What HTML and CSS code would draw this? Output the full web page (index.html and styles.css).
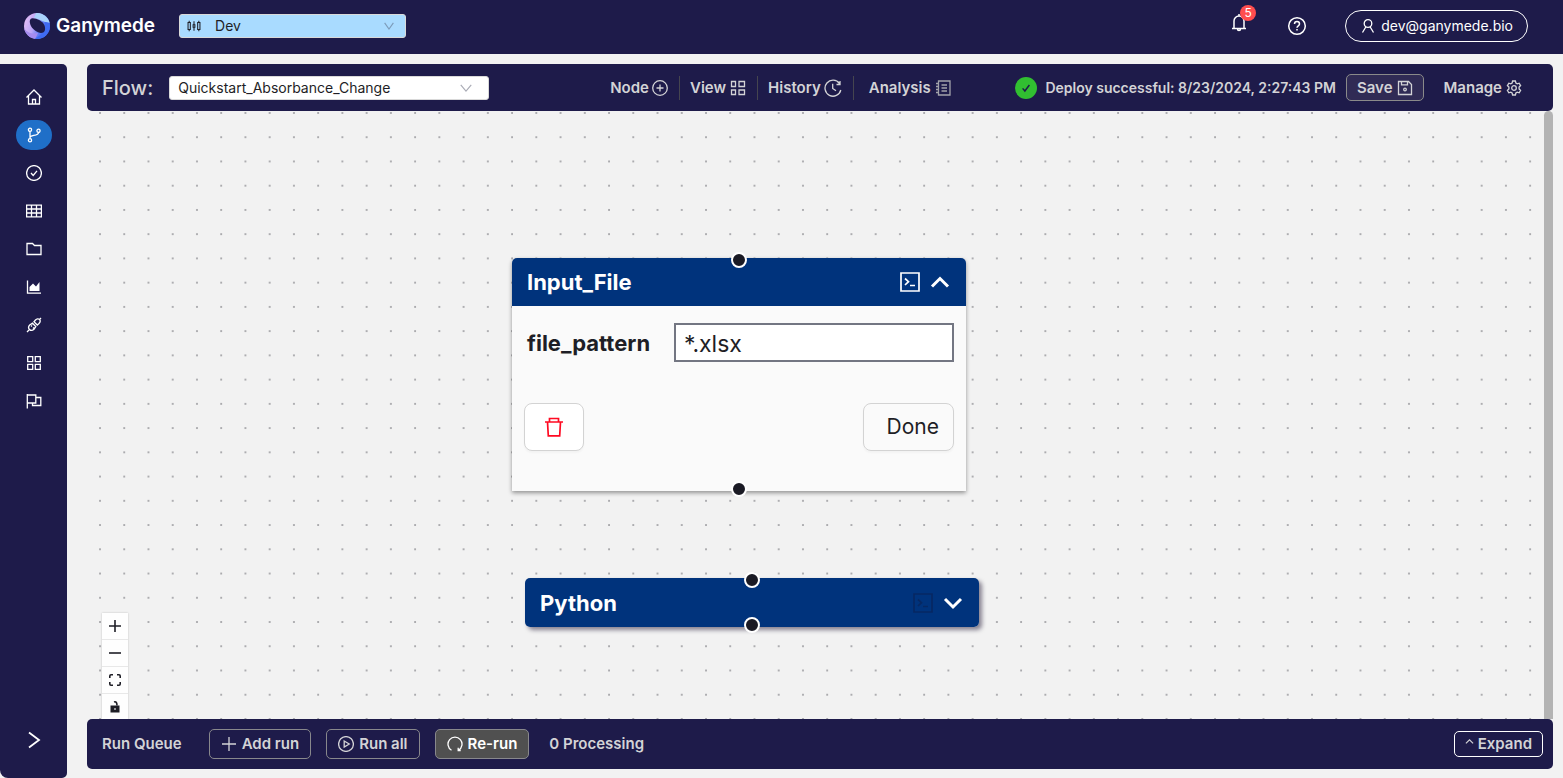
FILE: index.html
```html
<!DOCTYPE html>
<html lang="en">
<head>
<meta charset="utf-8">
<title>Ganymede</title>
<link rel="stylesheet" href="styles.css">
</head>
<body>
<header class="header">
  <a class="brand" href="#">
    <svg class="brand-mark" viewBox="0 0 26 26" aria-hidden="true">
      <defs>
        <linearGradient id="ring" x1="0" y1="0.3" x2="1" y2="0.7"><stop offset="0" stop-color="#e3bdf5"/><stop offset="0.4" stop-color="#b9a4f7"/><stop offset="0.65" stop-color="#5f7cf4"/><stop offset="1" stop-color="#2e55e6"/></linearGradient>
        <clipPath id="disc"><circle cx="13" cy="13" r="13"/></clipPath>
      </defs>
      <g clip-path="url(#disc)">
        <rect width="26" height="26" fill="url(#ring)"/>
        <path d="M12 0H26V10C21 10 16 6 10 5Z" fill="#a9d3fb"/>
        <path d="M21 9 26 10V26H10C17 23 21 18 21 9Z" fill="#3f6bf2"/>
        <path d="M0 15C4 21 9 21 14 20L11 26H0Z" fill="#a58bef"/>
      </g>
      <path d="M7.500 5.500C11 4.500 19 8 20.500 12.500S20.500 20 17 20 8 16 6.500 12 6 6 7.500 5.500Z" fill="#1e1b4a"/>
    </svg>
    <span>Ganymede</span>
  </a>
  <div class="select env-select">
    <svg class="icon env-icon" viewBox="0 0 16 16" aria-hidden="true"><path d="M2.500 2v2M2.500 12v2M1.200 4h2.600v8H1.200zM8 2.500v4M8 9.500v4M7 6.500h2v3H7zM13.500 2v2M13.500 12v2M12.200 4h2.600v8h-2.600z"/></svg>
    <select aria-label="Environment"><option>Dev</option></select>
    <svg class="icon chevron" viewBox="0 0 16 16" aria-hidden="true"><path d="m3 4.500 5 7 5-7"/></svg>
  </div>
  <div class="account">
    <button class="icon-button bell" aria-label="Notifications">
      <svg class="icon" viewBox="0 0 20 20" aria-hidden="true"><path d="M3 16.500h14M5 16.500V9a5 5 0 0 1 10 0v7.500M10 4V2M8.500 17c0 2 3 2 3 0"/></svg>
      <span class="badge">5</span>
    </button>
    <button class="icon-button help" aria-label="Help">
      <svg class="icon" viewBox="0 0 20 20" aria-hidden="true"><circle cx="10" cy="10" r="8.300"/><path d="M7.500 8c0-3.300 5-3.300 5 0 0 1.800-2.500 1.800-2.500 3.700"/><path d="M10 13v1.500"/></svg>
    </button>
    <button class="user">
      <svg class="icon" viewBox="0 0 16 16" aria-hidden="true"><circle cx="8" cy="5.500" r="3.800"/><path d="M2.500 14.500 5.800 9M13.500 14.500 10.200 9"/></svg>
      dev@ganymede.bio
    </button>
  </div>
</header>
<div class="body">
  <nav class="sidebar" aria-label="Main">
    <a href="#" aria-label="Home"><svg class="icon" viewBox="0 0 16 16"><path d="M.5 8.500 8 1l7.500 7.500M2.500 7v8h11V7M6.500 15v-4.500h3V15"/></svg></a>
    <a href="#" class="active" aria-label="Flows"><svg class="icon" viewBox="0 0 16 16"><circle cx="4" cy="2.800" r="1.600"/><circle cx="4" cy="13.200" r="1.600"/><circle cx="12.500" cy="3.800" r="1.600"/><path d="M4 4.500v7M12.500 5.500c0 4-8.500 2-8.500 5"/></svg></a>
    <a href="#" aria-label="Runs"><svg class="icon" viewBox="0 0 16 16"><circle cx="8" cy="8" r="7.400"/><path d="m5 8 2.200 2.500L11 5.800"/></svg></a>
    <a href="#" aria-label="Tables"><svg class="icon" viewBox="0 0 16 16"><path d="M.6 2.200h14.800v11.600H.6zM.6 6h14.800M.6 10h14.800M5.500 2.200v11.600M10.500 2.200v11.600"/></svg></a>
    <a href="#" aria-label="Files"><svg class="icon" viewBox="0 0 16 16"><path d="M1 13.500v-11h5.500l2 2H15v9z"/></svg></a>
    <a href="#" aria-label="Charts"><svg class="icon" viewBox="0 0 16 16"><path d="M1.500 1.500v12.700H15"/><path class="solid" d="M3.500 12V8L7 4.500l3 3L13.500 3v9z"/></svg></a>
    <a href="#" aria-label="Connections"><svg class="icon" viewBox="0 0 16 16"><path d="m1 15 2-2M13 3l2-2M6.500 6.200 9.800 9.500 8 12.200c-3.400 3-7.200-1-4.300-4.200zM8 4.700l3.300 3.300 1.700-1.500C16 3.200 12.200 0 9.500 3zM6 8.500 5 9.500M8 10.500 7 11.500"/></svg></a>
    <a href="#" aria-label="Apps"><svg class="icon" viewBox="0 0 16 16"><path d="M1.700 1.700h5v5h-5zM9.300 1.700h5v5h-5zM1.700 9.300h5v5h-5zM9.300 9.300h5v5h-5z"/></svg></a>
    <a href="#" aria-label="Flags"><svg class="icon" viewBox="0 0 16 16"><path d="M1.300 1v14.500M1.300 2h8.500v8H1.300M9.800 4.500h5v8H6.500V10"/></svg></a>
    <button class="icon-button open-menu" aria-label="Open menu"><svg class="icon" viewBox="0 0 20 20"><path d="m5 2.500 10 7.500-10 7.500"/></svg></button>
  </nav>
  <main class="main">
    <div class="toolbar">
      <label class="flow-label" for="flow">Flow:</label>
      <div class="select flow-select">
        <select id="flow"><option>Quickstart_Absorbance_Change</option></select>
        <svg class="icon chevron" viewBox="0 0 16 16" aria-hidden="true"><path d="m2 4.500 6 7 6-7"/></svg>
      </div>
      <div class="menu">
        <button>Node<svg class="icon" viewBox="0 0 16 16"><circle cx="8" cy="8" r="7.300"/><path d="M8 4.500v7M4.500 8h7"/></svg></button>
        <button class="spaced">View<svg class="icon" viewBox="0 0 16 16"><path d="M1.500 1.500h4v5h-4zM9 1.500h5.500v5H9zM1.500 10h4v4.500h-4zM9 10h5.500v4.500H9z"/></svg></button>
        <button>History<svg class="icon large" viewBox="0 0 18 18"><path d="M15.500 4.500A8 8 0 1 0 16.800 11M16 2v3.500h-3.500M8.700 4.800v4.700l3.300 2.300"/></svg></button>
        <button class="spaced">Analysis<svg class="icon muted" viewBox="0 0 16 16"><path d="M3.500 1H15v14H3.500zM1 3.500h2.500M1 6.500h2.500M1 9.500h2.500M1 12.500h2.500M6.500 5H12M6.500 8H12M6.500 11H12"/></svg></button>
      </div>
      <div class="status">
        <span class="ok"><svg class="icon" viewBox="0 0 16 16" aria-hidden="true"><path d="m3.500 8.500 3 3.500 6-8"/></svg></span>
        <span>Deploy successful: 8/23/2024, 2:27:43 PM</span>
      </div>
      <button class="save">Save<svg class="icon" viewBox="0 0 16 16"><path d="M1.500 1.500h10l3 3v10h-13zM4.500 1.500v3.300h6V1.500"/><circle cx="8" cy="9.500" r="1.300"/></svg></button>
      <button class="manage">Manage<svg class="icon" viewBox="0 0 16 16"><path d="M6.600 1h2.800l.5 2 1.300.8 2-.6 1.400 2.400-1.500 1.400v2l1.500 1.400-1.400 2.400-2-.6-1.300.8-.5 2H6.600l-.5-2-1.300-.8-2 .6-1.400-2.400L2.900 9V7L1.400 5.600l1.400-2.400 2 .6L6.100 3z"/><circle cx="8" cy="8" r="2.300"/></svg></button>
    </div>
    <div class="workspace">
      <section class="canvas" aria-label="Flow canvas">
        <svg class="dots" aria-hidden="true">
          <defs><pattern id="grid" width="24.240" height="24.240" patternUnits="userSpaceOnUse" patternTransform="translate(12 1)"><circle cx="1" cy="1" r="0.900" fill="#8f8f94"/></pattern></defs>
          <rect width="100%" height="100%" fill="url(#grid)"/>
        </svg>
        <article class="node node-input">
          <i class="port port-top"></i>
          <header class="node-head">
            <h2>Input_File</h2>
            <button class="icon-button" aria-label="Open editor"><svg class="icon terminal" viewBox="0 0 20 20"><path d="M1 1h18v18H1zM5 6.500l3.500 3.200L5 13M10 13.500h5"/></svg></button>
            <button class="icon-button" aria-label="Collapse"><svg class="icon caret" viewBox="0 0 20 20"><path d="m2 14.500 8-8 8 8"/></svg></button>
          </header>
          <div class="node-body">
            <div class="field">
              <label for="pattern">file_pattern</label>
              <input id="pattern" type="text" value="*.xlsx">
            </div>
            <div class="actions">
              <button class="remove" aria-label="Delete"><svg class="icon" viewBox="0 0 20 20"><path d="M1 5h18M5.500 5V1.500h9V5M3.500 5l.8 13.800h11.400L16.500 5"/></svg></button>
              <button class="done">Done</button>
            </div>
          </div>
          <i class="port port-bottom"></i>
        </article>
        <article class="node node-python">
          <i class="port port-top"></i>
          <header class="node-head">
            <h2>Python</h2>
            <button class="icon-button" aria-label="Open editor" disabled><svg class="icon terminal" viewBox="0 0 20 20"><path d="M1 1h18v18H1zM5 6.500l3.500 3.200L5 13M10 13.500h5"/></svg></button>
            <button class="icon-button" aria-label="Expand node"><svg class="icon caret" viewBox="0 0 20 20"><path d="m2 6 8 8 8-8"/></svg></button>
          </header>
          <i class="port port-bottom"></i>
        </article>
        <div class="zoom">
          <button aria-label="Zoom in"><svg class="icon" viewBox="0 0 12 12"><path d="M6 0v12M0 6h12"/></svg></button>
          <button aria-label="Zoom out"><svg class="icon" viewBox="0 0 12 12"><path d="M0 6h12"/></svg></button>
          <button aria-label="Fit view"><svg class="icon" viewBox="0 0 12 12"><path d="M.8 4V2q0-1.200 1.200-1.200h2M8 .8h2q1.200 0 1.200 1.200v2M11.200 8v2q0 1.200-1.200 1.200H8M4 11.200H2Q.8 11.200.8 10V8"/></svg></button>
          <button aria-label="Toggle lock"><svg class="icon" viewBox="0 0 12 12"><path class="solid" fill-rule="evenodd" d="M1.500 4.500h9v7h-9zM5.300 7.300v1.400h1.400V7.300z"/><path d="M5 1q3-1 3 3.500"/></svg></button>
        </div>
      </section>
      <div class="scrollbar"></div>
    </div>
    <footer class="queue">
      <span class="queue-title">Run Queue</span>
      <button class="outline"><svg class="icon" viewBox="0 0 16 16"><path d="M8 1v14M1 8h14"/></svg>Add run</button>
      <button class="outline"><svg class="icon" viewBox="0 0 16 16"><circle cx="8" cy="8" r="7.400"/><path d="m6.200 5 5 3-5 3z"/></svg>Run all</button>
      <button class="outline rerun"><svg class="icon" viewBox="0 0 16 16"><path d="M4.500 14.200a7 7 0 1 1 7 0M11.200 11.800v2.700h2.500"/></svg>Re-run</button>
      <span>0 Processing</span>
      <button class="outline expand"><svg class="icon" viewBox="0 0 10 10"><path d="m1 6 4-4 4 4"/></svg>Expand</button>
    </footer>
  </main>
</div>
</body>
</html>
```

FILE: styles.css
```css
* { box-sizing: border-box; }

body {
  margin: 0;
  height: 100vh;
  display: flex;
  flex-direction: column;
  gap: 10px;
  overflow: hidden;
  background: #f2f2f2;
  color: #1e1e26;
  font: 14px/20px Inter, "Liberation Sans", sans-serif;
}

button, select, input { font: inherit; color: inherit; }
button { background: none; border: 0; padding: 0; white-space: nowrap; }
a { color: inherit; text-decoration: none; }

.icon {
  display: block;
  flex: none;
  width: 16px;
  height: 16px;
  fill: none;
  stroke: currentColor;
  stroke-width: 1.3;
}
.solid { fill: currentColor; stroke: none; }
.icon-button { display: flex; align-items: center; justify-content: center; }

.header {
  flex: none;
  display: flex;
  align-items: center;
  height: 54px;
  padding: 0 35px 2px 24px;
  background: #1e1b4a;
  color: #fff;
}
.brand {
  display: flex;
  align-items: center;
  gap: 6px;
  font-size: 19px;
  font-weight: 600;
}
.brand-mark { width: 26px; height: 26px; }

.select { position: relative; display: flex; border-radius: 3px; color: #1e1e26; }
.select select {
  flex: 1;
  appearance: none;
  height: 24px;
  padding: 0 32px 0 8px;
  border: 1px solid #d9d9d9;
  border-radius: 3px;
  background: #fff;
}
.chevron { position: absolute; top: 5px; right: 10px; width: 14px; height: 14px; color: #a9abb5; }
.env-select { width: 227px; margin-left: 24px; }
.env-select select { padding-left: 35px; background: #a9dbff; }
.env-select .chevron { color: #7d9cba; }
.env-icon { position: absolute; top: 5px; left: 8px; width: 14px; height: 14px; stroke-width: 1.2; }

.account { display: flex; align-items: center; margin-left: auto; }
.bell { position: relative; margin-right: 38px; margin-bottom: 8px; }
.bell .icon, .help .icon { width: 20px; height: 20px; stroke-width: 1.5; }
.badge {
  position: absolute;
  top: -7px;
  right: -7px;
  width: 16px;
  height: 16px;
  border-radius: 8px;
  background: #ff4d4f;
  font-size: 12px;
  line-height: 16px;
  text-align: center;
}
.help { margin-right: 38px; }
.user {
  display: flex;
  align-items: center;
  gap: 5px;
  height: 32px;
  padding: 0 14px;
  border: 1px solid #fff;
  border-radius: 16px;
}

.body { flex: 1; display: flex; gap: 20px; min-height: 0; padding-right: 10px; }
.sidebar {
  flex: none;
  display: flex;
  flex-direction: column;
  align-items: center;
  gap: 8px;
  width: 67px;
  padding: 18px 0 28px;
  border-radius: 0 5px 5px 8px;
  background: #1e1b4a;
  color: #fff;
}
.sidebar a {
  display: flex;
  align-items: center;
  justify-content: center;
  width: 36px;
  height: 30px;
  border-radius: 15px;
}
.sidebar .active { background: #1f6fc8; }
.open-menu { margin-top: auto; }
.open-menu .icon { width: 20px; height: 20px; stroke-width: 1.8; }

.main { flex: 1; display: flex; flex-direction: column; min-width: 0; padding-bottom: 9px; }
.toolbar, .queue {
  flex: none;
  display: flex;
  align-items: center;
  border-radius: 5px;
  background: #1e1b4a;
  color: #d3d3d6;
  font-weight: 600;
  white-space: nowrap;
}
.toolbar { height: 47px; padding: 0 31px 0 15px; }
.flow-label { font-size: 20px; font-weight: 500; }
.flow-select { width: 320px; margin-left: 16px; font-weight: 400; }
.flow-select .chevron { right: 16px; }

.menu { display: flex; margin-left: 111px; font-size: 15px; }
.menu button {
  display: flex;
  align-items: center;
  gap: 3px;
  height: 24px;
  padding: 0 11px 0 10px;
  border-left: 1px solid #45454f;
  font-weight: 600;
}
.menu button:first-child { border-left: 0; }
.menu button:last-child { padding-left: 15px; }
.menu .spaced { gap: 4px; }
.menu .large { width: 18px; height: 18px; }
.menu .muted { color: #a3a3aa; }

.status { display: flex; align-items: center; gap: 8px; margin-left: auto; }
.ok {
  display: flex;
  align-items: center;
  justify-content: center;
  width: 22px;
  height: 22px;
  border-radius: 11px;
  background: #31bf31;
  color: #1e1b4a;
}
.ok .icon { width: 12px; height: 12px; stroke-width: 2; }
.save, .manage { display: flex; align-items: center; gap: 4px; font-size: 15px; font-weight: 600; }
.save {
  height: 27px;
  margin: 0 20px 0 10px;
  padding: 0 10px;
  border: 1px solid #8a8a8a;
  border-radius: 5px;
  background: #302b55;
}

.workspace { flex: 1; display: flex; min-height: 0; }
.canvas { position: relative; flex: 1; overflow: hidden; }
.dots { display: block; width: 100%; height: 100%; }
.scrollbar { width: 9px; border-radius: 5px 5px 0 0; background: #b3b3b3; }

.node {
  position: absolute;
  width: 454px;
  border-radius: 5px 5px 0 0;
  box-shadow: 0 2px 4px rgba(0, 0, 0, 0.4);
  font-size: 21px;
}
.node-input { left: 425px; top: 147px; }
.node-python { left: 438px; top: 467px; border-radius: 5px; box-shadow: 3px 3px 4px rgba(30, 20, 50, 0.5); }
.node-head {
  display: flex;
  align-items: center;
  gap: 10px;
  height: 48px;
  padding: 0 16px 0 15px;
  border-radius: 5px 5px 0 0;
  background: #00337c;
  color: #fff;
}
.node-python .node-head { height: 49px; border-radius: 5px; }
.node-head h2 { flex: 1; margin: 0; font-size: 22px; line-height: 24px; font-weight: 700; }
.node-head .icon { width: 20px; height: 20px; stroke-width: 1.7; }
.node-head .caret { stroke-width: 3; }
.node-head button:disabled { color: #062863; }

.port {
  position: absolute;
  z-index: 1;
  left: 219px;
  width: 16px;
  height: 16px;
  border: 2px solid #fff;
  border-radius: 8px;
  background: #1a1a24;
}
.port-top { top: -6px; }
.port-bottom { bottom: -6px; }

.node-body { padding: 17px 12px 40px; background: #fafafa; }
.field { display: flex; align-items: center; justify-content: space-between; padding-left: 3px; }
.field label { font-size: 22px; font-weight: 700; }
.field input {
  width: 280px;
  height: 39px;
  padding: 2px 8px 0;
  border: 2px solid #737682;
  background: #fff;
  font-size: 23px;
}
.actions { display: flex; justify-content: space-between; margin-top: 41px; }
.actions button {
  display: flex;
  align-items: center;
  height: 48px;
  border: 1px solid #d3d3d3;
  border-radius: 8px;
  box-shadow: 0 2px 2px rgba(0, 0, 0, 0.03);
}
.remove { padding: 0 19px; background: #fff; color: #ff0a22; }
.remove .icon { width: 20px; height: 20px; stroke-width: 1.7; }
.done { padding: 0 14px 0 23px; line-height: 24px; }

.zoom {
  position: absolute;
  left: 15px;
  bottom: -2px;
  display: flex;
  flex-direction: column;
  box-shadow: 0 0 2px rgba(0, 0, 0, 0.2);
}
.zoom button {
  display: flex;
  align-items: center;
  justify-content: center;
  width: 26px;
  height: 27px;
  border-bottom: 1px solid #e8e8e8;
  background: #fefefe;
}
.zoom .icon { width: 12px; height: 12px; stroke-width: 1.6; }

.queue { height: 50px; padding: 0 10px 0 15px; font-size: 15px; }
.queue-title { margin-right: 27px; }
.outline {
  display: flex;
  align-items: center;
  gap: 5px;
  height: 30px;
  margin-right: 15px;
  padding: 0 11px;
  border: 1px solid #88888c;
  border-radius: 5px;
  font-weight: 600;
}
.outline.rerun { margin-right: 20px; background: #505050; color: #fff; }
.outline.expand { gap: 4px; height: 26px; margin: 0 0 0 auto; padding: 0 10px; border-color: #fff; }
.expand .icon { width: 9px; height: 9px; margin-bottom: 4px; }
```
